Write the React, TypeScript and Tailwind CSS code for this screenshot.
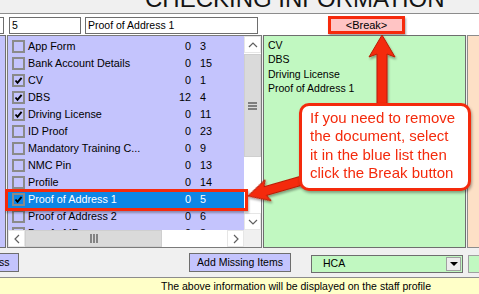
const rows = [
  { name: 'App Form', a: '0', b: '3', checked: false },
  { name: 'Bank Account Details', a: '0', b: '15', checked: false },
  { name: 'CV', a: '0', b: '1', checked: true },
  { name: 'DBS', a: '12', b: '4', checked: true },
  { name: 'Driving License', a: '0', b: '11', checked: true },
  { name: 'ID Proof', a: '0', b: '23', checked: false },
  { name: 'Mandatory Training C...', a: '0', b: '9', checked: false },
  { name: 'NMC Pin', a: '0', b: '13', checked: false },
  { name: 'Profile', a: '0', b: '14', checked: false },
  { name: 'Proof of Address 1', a: '0', b: '5', checked: true, selected: true },
  { name: 'Proof of Address 2', a: '0', b: '6', checked: false },
  { name: 'Proof of ID', a: '0', b: '8', checked: true },
]

const linked = ['CV', 'DBS', 'Driving License', 'Proof of Address 1']

function CheckBox({ checked }: { checked: boolean }) {
  return (
    <div className="w-[13px] h-[13px] border-2 border-[#8a8a8a] flex items-center justify-center shrink-0">
      {checked && (
        <svg width="9" height="9" viewBox="0 0 9 9">
          <path d="M1.5 4.5 L3.5 6.8 L7.6 1.8" fill="none" stroke="#000" strokeWidth="1.9" />
        </svg>
      )}
    </div>
  )
}

function Chevron({ dir }: { dir: 'up' | 'down' | 'left' | 'right' }) {
  const d = {
    up: 'M1 6 L5 2 L9 6',
    down: 'M1 2 L5 6 L9 2',
    left: 'M6 1 L2 5 L6 9',
    right: 'M2 1 L6 5 L2 9',
  }[dir]
  const w = dir === 'up' || dir === 'down' ? 10 : 8
  const h = dir === 'up' || dir === 'down' ? 8 : 10
  return (
    <svg width={w} height={h} viewBox={`0 0 ${w} ${h}`}>
      <path d={d} fill="none" stroke="#606060" strokeWidth="1.2" />
    </svg>
  )
}

export default function App() {
  return (
    <div
      className="relative w-[479px] h-[294px] overflow-hidden bg-[#f0f0f0] text-black"
      style={{ fontFamily: '"Liberation Sans", Arial, sans-serif' }}
    >
      {/* Title strip (cut off at top) */}
      <div className="h-[14px] overflow-hidden border-b border-[#8c8c8c] pl-[145px]">
        <div className="-mt-[13px] text-[24px] leading-none text-[#141414] whitespace-nowrap">
          CHECKING INFORMATION
        </div>
      </div>

      {/* Input row */}
      <div className="h-[21px] bg-white flex items-start pt-[3px] text-[10.5px]">
        <div className="w-[4px] h-[17px] border border-l-0 border-[#6e6e6e]" />
        <div className="ml-[5px] w-[72px] h-[17px] border border-[#6e6e6e] pl-[2px] leading-[15px]">5</div>
        <div className="ml-[4px] w-[173px] h-[17px] border border-[#6e6e6e] pl-[2px] leading-[15px]">
          Proof of Address 1
        </div>
        <div className="ml-[70px] -mt-[1px] w-[77px] h-[18px] border-[3px] border-[#f62a0c] bg-[#ffc4c4] flex items-center justify-center text-[11px] shadow-[1px_2px_2px_rgba(0,0,0,0.35)]">
          &lt;Break&gt;
        </div>
      </div>

      {/* Main panels */}
      <div className="h-[213px] flex text-[10.5px]">
        <div className="w-[6px] bg-[#c4c4fd] border border-l-0 border-[#6e6e6e]" />
        <div className="ml-[1px] w-[255px] border border-[#7a7a7a] bg-[#c4c4fd] flex flex-col">
          <div className="h-[194px] flex">
            <div className="w-[236px] overflow-hidden pt-[2px] text-[10.8px]">
              {rows.map((r) => (
                <div
                  key={r.name}
                  className={`h-[17px] flex items-center whitespace-nowrap ${
                    r.selected ? 'bg-[#0d86e6] text-white' : ''
                  }`}
                >
                  <div className="ml-[4px]">
                    <CheckBox checked={r.checked} />
                  </div>
                  <div className="ml-[3px] w-[150px]">{r.name}</div>
                  <div className="w-[13px] text-right">{r.a}</div>
                  <div className="ml-[9px]">{r.b}</div>
                </div>
              ))}
            </div>
            {/* Vertical scrollbar */}
            <div className="w-[17px] bg-white flex flex-col">
              <div className="h-[17px] flex items-center justify-center border border-[#e6e6e6]">
                <Chevron dir="up" />
              </div>
              <div className="mt-[1px] h-[103px] bg-[#dadada] border border-[#cfcfcf] flex items-center justify-center">
                <svg width="9" height="8" viewBox="0 0 9 8">
                  <path d="M0 1 H9 M0 4 H9 M0 7 H9" stroke="#606060" strokeWidth="1.4" />
                </svg>
              </div>
              <div className="flex-1" />
              <div className="h-[17px] flex items-center justify-center border border-[#e6e6e6]">
                <Chevron dir="down" />
              </div>
            </div>
          </div>
          {/* Horizontal scrollbar */}
          <div className="h-[17px] flex bg-white">
            <div className="w-[17px] flex items-center justify-center border border-[#e6e6e6]">
              <Chevron dir="left" />
            </div>
            <div className="w-[137px] bg-[#dadada] border border-[#cfcfcf] flex items-center justify-center">
              <svg width="8" height="9" viewBox="0 0 8 9">
                <path d="M1 0 V9 M4 0 V9 M7 0 V9" stroke="#606060" strokeWidth="1.4" />
              </svg>
            </div>
            <div className="w-[65px]" />
            <div className="w-[17px] flex items-center justify-center border border-[#e6e6e6]">
              <Chevron dir="right" />
            </div>
            <div className="flex-1 bg-[#f0f0f0]" />
          </div>
        </div>
        <div className="ml-[1px] w-[203px] border border-[#6e6e6e] bg-[#c1f8c1] pl-[4px] pt-[2px] leading-[14.4px]">
          {linked.map((l) => (
            <div key={l}>{l}</div>
          ))}
        </div>
        <div className="ml-[1px] flex-1 border border-r-0 border-[#8c8c8c] bg-[#fde0c6]" />
      </div>

      {/* Bottom buttons */}
      <div className="h-[29px] flex items-start text-[10.5px]">
        <div className="mt-[5px] w-[19px] h-[19px] bg-[#c4c4fd] border border-l-0 border-[#6e6e6e] leading-[17px] overflow-hidden">
          <span className="-ml-[1px]">ss</span>
        </div>
        <div className="ml-[170px] mt-[5px] w-[102px] h-[19px] bg-[#c4c4fd] border border-[#6e6e6e] flex items-center justify-center whitespace-nowrap">
          Add Missing Items
        </div>
        <div className="ml-[20px] mt-[7px] w-[152px] h-[18px] bg-[#c1f8c1] border border-[#6e6e6e] flex items-center">
          <span className="ml-[11px] flex-1">HCA</span>
          <div className="mr-[1px] w-[15px] h-[14px] bg-[#ececec] border border-[#a0a0a0] flex items-center justify-center">
            <svg width="8" height="4" viewBox="0 0 8 4">
              <path d="M0 0 H8 L4 4 Z" fill="#000" />
            </svg>
          </div>
        </div>
        <div className="ml-[5px] mt-[7px] flex-1 h-[18px] bg-[#c1f8c1] border border-r-0 border-[#a0a0a0]" />
      </div>

      {/* Status bar */}
      <div className="h-[17px] bg-[#ffffc8] border-t border-[#8c8c8c] pl-[161px] text-[10.5px] leading-[16px] whitespace-nowrap">
        The above information will be displayed on the staff profile
      </div>

      {/* Annotation: selected row highlight */}
      <div className="absolute left-[5px] top-[189px] w-[243px] h-[22px] border-[3px] border-[#f62a0c] shadow-[1px_2px_2px_rgba(0,0,0,0.3)]" />

      {/* Annotation arrows */}
      <svg className="absolute left-0 top-0 pointer-events-none" width="479" height="294" viewBox="0 0 479 294">
        <defs>
          <filter id="sh" x="-20%" y="-20%" width="140%" height="140%">
            <feDropShadow dx="1" dy="2" stdDeviation="1.2" floodColor="#000" floodOpacity="0.35" />
          </filter>
        </defs>
        <g filter="url(#sh)">
          <polygon
            transform="translate(382 35) rotate(90)"
            points="0,0 22,-13 19,-5 72,-5 72,5 19,5 22,13"
            fill="#f42a0c"
            stroke="#b81c06"
            strokeWidth="1"
          />
          <polygon
            transform="translate(248 196) rotate(-16)"
            points="0,0 21,-11 18,-4.5 64,-4.5 64,4.5 18,4.5 21,11"
            fill="#f42a0c"
            stroke="#b81c06"
            strokeWidth="1"
          />
        </g>
      </svg>

      {/* Annotation callout */}
      <div className="absolute left-[299px] top-[103px] w-[172px] h-[88px] bg-white border-[3px] border-[#f42a0c] rounded-[10px] shadow-[1px_2px_3px_rgba(0,0,0,0.35)] pl-[8px] pt-[3px] text-[15px] leading-[18.4px] text-[#f42a0c] whitespace-nowrap">
        <div>If you need to remove</div>
        <div>the document, select</div>
        <div>it in the blue list then</div>
        <div>click the Break button</div>
      </div>
    </div>
  )
}
